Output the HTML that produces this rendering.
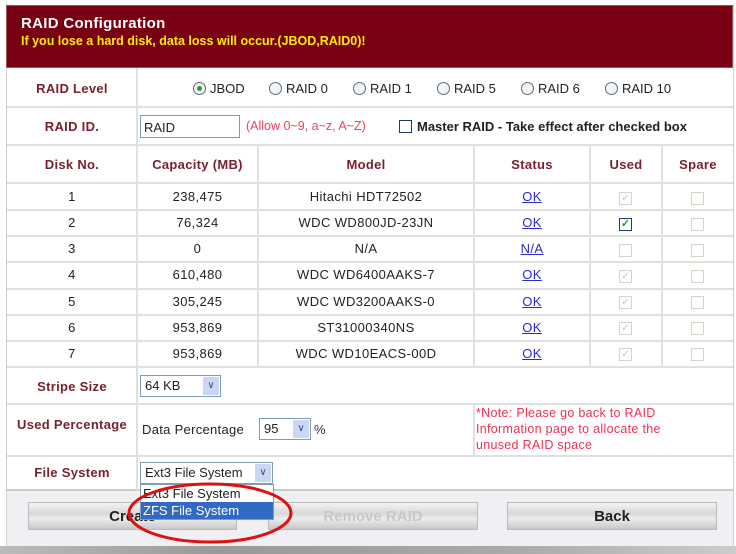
<!DOCTYPE html>
<html><head><style>
*{margin:0;padding:0;box-sizing:border-box}
body{width:736px;height:554px;background:#fff;position:relative;overflow:hidden;font-family:"Liberation Sans",sans-serif;font-size:13px;color:#333}
.a{position:absolute}
.hl{position:absolute;height:2px;background:#e0e0e0}
.vl{position:absolute;width:2px;background:#e0e0e0}
.lab{position:absolute;color:#7a1f2c;font-weight:bold;text-align:center;font-size:13px;letter-spacing:.3px}
.c{position:absolute;text-align:center;font-size:13px;color:#222;letter-spacing:.4px}
.ok{color:#2a2ad0;text-decoration:underline}
.cb{position:absolute;width:13px;height:13px;border:1px solid #d6d3c8;background:#fff}
.rad{display:inline-block;width:13px;height:13px;border:1px solid #5a6b80;border-radius:50%;vertical-align:-2px;margin-right:4px;position:relative;background:#f4f4f4}
.ro{position:absolute;top:81px;font-size:13px;color:#222;white-space:nowrap}
.sel{position:absolute;border:1px solid #7f9db9;background:#fff;font-size:13px;padding:2px 4px;color:#222}
.arr{position:absolute;right:1px;top:1px;bottom:1px;width:16px;background:#c9d7f5;color:#3a4f8a;font-size:10px;text-align:center;line-height:18px}
.btn{position:absolute;height:28px;background:linear-gradient(#f3f3f3,#d8d8d8 40%,#ececec 60%,#c8c8c8);border:1px solid #bbb;text-align:center;font-weight:bold;font-size:15px;line-height:27px;color:#222}
</style></head><body>
<div class="a" style="left:6px;top:4px;width:728px;height:542px;border:1px solid #cfcfcf;border-top:none"></div>
<div class="a" style="left:6px;top:5px;width:727px;height:63px;background:#780012;border:1px solid #a8505a"></div>
<div class="a" style="left:21px;top:15px;color:#fff;font-weight:bold;font-size:15px;letter-spacing:.3px">RAID Configuration</div>
<div class="a" style="left:21px;top:34px;color:#ffee00;font-weight:bold;font-size:12.5px">If you lose a hard disk, data loss will occur.(JBOD,RAID0)!</div>

<div class="hl" style="left:7px;top:106px;width:726px"></div>
<div class="hl" style="left:7px;top:144px;width:726px"></div>
<div class="hl" style="left:7px;top:182px;width:726px"></div>
<div class="hl" style="left:7px;top:209px;width:726px"></div>
<div class="hl" style="left:7px;top:235px;width:726px"></div>
<div class="hl" style="left:7px;top:261px;width:726px"></div>
<div class="hl" style="left:7px;top:288px;width:726px"></div>
<div class="hl" style="left:7px;top:314px;width:726px"></div>
<div class="hl" style="left:7px;top:340px;width:726px"></div>
<div class="hl" style="left:7px;top:366px;width:726px"></div>
<div class="hl" style="left:7px;top:403px;width:726px"></div>
<div class="hl" style="left:7px;top:455px;width:726px"></div>
<div class="hl" style="left:7px;top:489px;width:726px;background:#ccc"></div>
<div class="vl" style="left:136px;top:68px;height:422px"></div>
<div class="vl" style="left:257px;top:145px;height:222px"></div>
<div class="vl" style="left:473px;top:145px;height:222px"></div>
<div class="vl" style="left:473px;top:404px;height:52px"></div>
<div class="vl" style="left:589px;top:145px;height:222px"></div>
<div class="vl" style="left:661px;top:145px;height:222px"></div>

<div class="lab" style="left:7px;width:130px;top:81px">RAID Level</div>
<div class="ro" style="left:193px"><span class="rad"><span class="a" style="left:3px;top:3px;width:5px;height:5px;border-radius:50%;background:#2e9a2e"></span></span>JBOD</div>
<div class="ro" style="left:269px"><span class="rad"></span>RAID 0</div>
<div class="ro" style="left:353px"><span class="rad"></span>RAID 1</div>
<div class="ro" style="left:437px"><span class="rad"></span>RAID 5</div>
<div class="ro" style="left:521px"><span class="rad"></span>RAID 6</div>
<div class="ro" style="left:605px"><span class="rad"></span>RAID 10</div>

<div class="lab" style="left:7px;width:130px;top:119px">RAID ID.</div>
<div class="a" style="left:140px;top:115px;width:100px;height:23px;border:1px solid #7f9db9;padding:4px 3px;font-size:13px;color:#222">RAID</div>
<div class="a" style="left:246px;top:119px;color:#f04060;font-size:12.5px">(Allow 0~9, a~z, A~Z)</div>
<div class="cb" style="left:399px;top:120px;border-color:#1c3c6c;width:13px;height:13px"></div>
<div class="a" style="left:417px;top:119px;color:#222;font-weight:bold;font-size:13px">Master RAID - Take effect after checked box</div>

<div class="lab" style="left:7px;width:130px;top:157px">Disk No.</div>
<div class="lab" style="left:137px;width:121px;top:157px">Capacity (MB)</div>
<div class="lab" style="left:258px;width:216px;top:157px">Model</div>
<div class="lab" style="left:474px;width:116px;top:157px">Status</div>
<div class="lab" style="left:590px;width:72px;top:157px">Used</div>
<div class="lab" style="left:662px;width:72px;top:157px">Spare</div>

<div class="c" style="left:7px;width:130px;top:189px">1</div><div class="c" style="left:137px;width:121px;top:189px">238,475</div><div class="c" style="left:258px;width:216px;top:189px">Hitachi HDT72502</div><div class="c ok" style="left:474px;width:116px;top:189px">OK</div>
<div class="c" style="left:7px;width:130px;top:215px">2</div><div class="c" style="left:137px;width:121px;top:215px">76,324</div><div class="c" style="left:258px;width:216px;top:215px">WDC WD800JD-23JN</div><div class="c ok" style="left:474px;width:116px;top:215px">OK</div>
<div class="c" style="left:7px;width:130px;top:241px">3</div><div class="c" style="left:137px;width:121px;top:241px">0</div><div class="c" style="left:258px;width:216px;top:241px">N/A</div><div class="c ok" style="left:474px;width:116px;top:241px">N/A</div>
<div class="c" style="left:7px;width:130px;top:267px">4</div><div class="c" style="left:137px;width:121px;top:267px">610,480</div><div class="c" style="left:258px;width:216px;top:267px">WDC WD6400AAKS-7</div><div class="c ok" style="left:474px;width:116px;top:267px">OK</div>
<div class="c" style="left:7px;width:130px;top:294px">5</div><div class="c" style="left:137px;width:121px;top:294px">305,245</div><div class="c" style="left:258px;width:216px;top:294px">WDC WD3200AAKS-0</div><div class="c ok" style="left:474px;width:116px;top:294px">OK</div>
<div class="c" style="left:7px;width:130px;top:320px">6</div><div class="c" style="left:137px;width:121px;top:320px">953,869</div><div class="c" style="left:258px;width:216px;top:320px">ST31000340NS</div><div class="c ok" style="left:474px;width:116px;top:320px">OK</div>
<div class="c" style="left:7px;width:130px;top:346px">7</div><div class="c" style="left:137px;width:121px;top:346px">953,869</div><div class="c" style="left:258px;width:216px;top:346px">WDC WD10EACS-00D</div><div class="c ok" style="left:474px;width:116px;top:346px">OK</div>

<div class="cb" style="left:619px;top:192px;color:#c8c5b8;font-size:10px;line-height:11px;text-align:center">✓</div>
<div class="cb" style="left:619px;top:218px;border-color:#1c4470;color:#22a022;font-size:11px;line-height:11px;text-align:center;font-weight:bold">✓</div>
<div class="cb" style="left:619px;top:244px"></div>
<div class="cb" style="left:619px;top:270px;color:#c8c5b8;font-size:10px;line-height:11px;text-align:center">✓</div>
<div class="cb" style="left:619px;top:296px;color:#c8c5b8;font-size:10px;line-height:11px;text-align:center">✓</div>
<div class="cb" style="left:619px;top:322px;color:#c8c5b8;font-size:10px;line-height:11px;text-align:center">✓</div>
<div class="cb" style="left:619px;top:348px;color:#c8c5b8;font-size:10px;line-height:11px;text-align:center">✓</div>
<div class="cb" style="left:691px;top:192px"></div><div class="cb" style="left:691px;top:218px"></div><div class="cb" style="left:691px;top:244px"></div><div class="cb" style="left:691px;top:270px"></div><div class="cb" style="left:691px;top:296px"></div><div class="cb" style="left:691px;top:322px"></div><div class="cb" style="left:691px;top:348px"></div>

<div class="lab" style="left:7px;width:130px;top:379px">Stripe Size</div>
<div class="sel" style="left:140px;top:375px;width:81px;height:22px">64 KB<div class="arr">&#x2228;</div></div>

<div class="lab" style="left:7px;width:130px;top:417px">Used Percentage</div>
<div class="a" style="left:142px;top:422px;font-size:13px;color:#222;letter-spacing:.3px">Data Percentage</div>
<div class="sel" style="left:259px;top:418px;width:52px;height:22px">95<div class="arr">&#x2228;</div></div>
<div class="a" style="left:314px;top:422px;font-size:13px">%</div>
<div class="a" style="left:476px;top:405px;color:#f03050;font-size:12.5px;line-height:16px;letter-spacing:.3px">*Note: Please go back to RAID<br>Information page to allocate the<br>unused RAID space</div>

<div class="lab" style="left:7px;width:130px;top:465px">File System</div>
<div class="sel" style="left:140px;top:462px;width:133px;height:22px">Ext3 File System<div class="arr">&#x2228;</div></div>

<div class="a" style="left:7px;top:491px;width:726px;height:55px;background:#f0f0f4"></div>
<div class="btn" style="left:28px;top:502px;width:209px">Create</div>
<div class="btn" style="left:268px;top:502px;width:210px;color:#c8c8c8">Remove RAID</div>
<div class="btn" style="left:507px;top:502px;width:210px">Back</div>
<div class="a" style="left:140px;top:484px;width:134px;height:36px;background:#fff;border:1px solid #7f9db9"></div>
<div class="a" style="left:143px;top:486px;font-size:13px;color:#222">Ext3 File System</div>
<div class="a" style="left:141px;top:502px;width:132px;height:17px;background:#316ac5;color:#fff;font-size:13px;padding:1px 2px">ZFS File System</div>
<svg class="a" style="left:120px;top:478px" width="180" height="70"><ellipse cx="90" cy="35" rx="81" ry="29" fill="none" stroke="#e01010" stroke-width="3"/></svg>
<div class="a" style="left:0;top:546px;width:736px;height:8px;background:linear-gradient(90deg,#bbb,#999 30%,#aaa 70%,#ccc)"></div>
</body></html>
